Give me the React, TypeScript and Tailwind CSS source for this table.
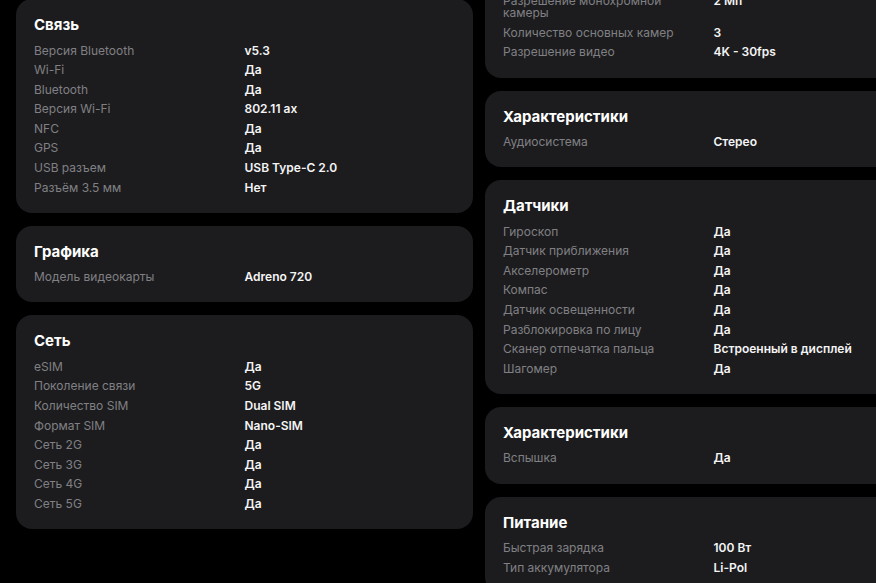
import React from "react";

type Spec = { label: string; value: string };
type Section = { title: string; rows: Spec[] };

const leftColumn: Section[] = [
  {
    title: "Связь",
    rows: [
      { label: "Версия Bluetooth", value: "v5.3" },
      { label: "Wi-Fi", value: "Да" },
      { label: "Bluetooth", value: "Да" },
      { label: "Версия Wi-Fi", value: "802.11 ax" },
      { label: "NFC", value: "Да" },
      { label: "GPS", value: "Да" },
      { label: "USB разъем", value: "USB Type-C 2.0" },
      { label: "Разъём 3.5 мм", value: "Нет" },
    ],
  },
  {
    title: "Графика",
    rows: [{ label: "Модель видеокарты", value: "Adreno 720" }],
  },
  {
    title: "Сеть",
    rows: [
      { label: "eSIM", value: "Да" },
      { label: "Поколение связи", value: "5G" },
      { label: "Количество SIM", value: "Dual SIM" },
      { label: "Формат SIM", value: "Nano-SIM" },
      { label: "Сеть 2G", value: "Да" },
      { label: "Сеть 3G", value: "Да" },
      { label: "Сеть 4G", value: "Да" },
      { label: "Сеть 5G", value: "Да" },
    ],
  },
];

const rightColumn: Section[] = [
  {
    title: "Камера",
    rows: [
      { label: "Основная камера", value: "50 Мп" },
      { label: "Фронтальная камера", value: "32 Мп" },
      { label: "Разрешение монохромной камеры", value: "2 Мп" },
      { label: "Количество основных камер", value: "3" },
      { label: "Разрешение видео", value: "4K - 30fps" },
    ],
  },
  {
    title: "Характеристики",
    rows: [{ label: "Аудиосистема", value: "Стерео" }],
  },
  {
    title: "Датчики",
    rows: [
      { label: "Гироскоп", value: "Да" },
      { label: "Датчик приближения", value: "Да" },
      { label: "Акселерометр", value: "Да" },
      { label: "Компас", value: "Да" },
      { label: "Датчик освещенности", value: "Да" },
      { label: "Разблокировка по лицу", value: "Да" },
      { label: "Сканер отпечатка пальца", value: "Встроенный в дисплей" },
      { label: "Шагомер", value: "Да" },
    ],
  },
  {
    title: "Характеристики",
    rows: [{ label: "Вспышка", value: "Да" }],
  },
  {
    title: "Питание",
    rows: [
      { label: "Быстрая зарядка", value: "100 Вт" },
      { label: "Тип аккумулятора", value: "Li-Pol" },
    ],
  },
];

function SpecCard({ section }: { section: Section }) {
  return (
    <div className="rounded-2xl bg-[#1c1c1e] px-[18px] pt-4 pb-[15px]">
      <h2 className="text-[15px] leading-5 font-bold text-white mb-[6px]">{section.title}</h2>
      <div>
        {section.rows.map((row) => (
          <div key={row.label} className="grid grid-cols-2 py-[3.5px] text-[12px] leading-[12.6px]">
            <span className="text-[#808084] pr-8">{row.label}</span>
            <span className="text-[#f4f4f5] font-semibold">{row.value}</span>
          </div>
        ))}
      </div>
    </div>
  );
}

export default function App() {
  return (
    <div
      className="h-[583px] w-[876px] overflow-hidden bg-black flex gap-3 px-4"
      style={{ fontFamily: "Inter, 'Noto Sans', sans-serif" }}
    >
      <div className="w-[457px] shrink-0 flex flex-col gap-[13px] mt-[-1px]">
        {leftColumn.map((s) => (
          <SpecCard key={s.title} section={s} />
        ))}
      </div>
      <div className="w-[457px] shrink-0 flex flex-col gap-[13px] mt-[-90px]">
        {rightColumn.map((s, i) => (
          <SpecCard key={s.title + i} section={s} />
        ))}
      </div>
    </div>
  );
}
